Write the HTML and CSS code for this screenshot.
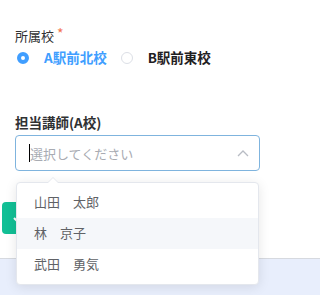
FILE: index.html
```html
<!DOCTYPE html>
<html lang="ja">
<head>
<meta charset="utf-8">
<link rel="stylesheet" href="styles.css">
</head>
<body>
<div class="page">
  <div class="panel">
    <div class="field">
      <div class="label">所属校<span class="req">*</span></div>
      <div class="radios">
        <span class="radio on"></span><span class="rtext on">A駅前北校</span>
        <span class="radio"></span><span class="rtext">B駅前東校</span>
      </div>
    </div>
    <div class="field second">
      <div class="label bold">担当講師(A校)</div>
      <div class="select">
        <span class="caret"></span><span class="ph">選択してください</span>
        <svg class="chev" width="12" height="8" viewBox="0 0 12 8"><path d="M1 7 L6 2 L11 7" fill="none" stroke="#b8bcc4" stroke-width="1.3"/></svg>
      </div>
    </div>
    <div class="btn">
      <svg width="10" height="10" viewBox="0 0 10 10"><path d="M2 5 L4.5 7.5 L9 2" fill="none" stroke="#fff" stroke-width="2"/></svg>
    </div>
    <div class="dropdown">
      <span class="arrow"></span>
      <ul class="list">
        <li class="item">山田　太郎</li>
        <li class="item hover">林　京子</li>
        <li class="item">武田　勇気</li>
      </ul>
    </div>
  </div>
</div>
</body>
</html>
```

FILE: styles.css
```css
html, body {
  margin: 0;
  padding: 0;
}
body {
  font-family: "Noto Sans CJK JP", "Noto Sans", sans-serif;
  font-size: 13px;
  background: #e8eefc;
  height: 295px;
  overflow: hidden;
}
.page {
  height: 295px;
}
.panel {
  position: relative;
  background: #fff;
  height: 259px;
  box-sizing: border-box;
  border-bottom: 1px solid #d6d9df;
  padding: 26px 0 0 15px;
}
.label {
  height: 20px;
  line-height: 20px;
  color: #303133;
  font-size: 13px;
}
.label.bold {
  font-weight: 700;
  font-size: 13.5px;
}
.req {
  color: #f3734f;
  font-size: 14px;
  margin-left: 3px;
  vertical-align: top;
  line-height: 14px;
}
.radios {
  margin-top: 2px;
  height: 20px;
  display: flex;
  align-items: center;
  padding-left: 2px;
}
.radio {
  width: 12px;
  height: 12px;
  box-sizing: border-box;
  border-radius: 50%;
  border: 1px solid #dcdfe6;
  background: #fff;
}
.radio.on {
  border: 4px solid #409eff;
}
.rtext {
  font-weight: 700;
  font-size: 13.5px;
  color: #1f2022;
  margin-left: 15px;
  margin-right: 14px;
  line-height: 20px;
  position: relative;
  top: -1px;
}
.rtext.on {
  color: #409eff;
}
.second {
  margin-top: 44px;
}
.select {
  margin-top: 3px;
  width: 245px;
  height: 36px;
  box-sizing: border-box;
  border: 1px solid #7fb4de;
  border-radius: 4px;
  display: flex;
  align-items: center;
  padding-left: 13px;
  padding-right: 10px;
}
.caret {
  width: 1px;
  height: 18px;
  background: #000;
}
.ph {
  color: #a8abb2;
  flex: 1;
  font-size: 13px;
}
.chev {
  display: block;
}
.btn {
  margin-top: 31px;
  margin-left: -13px;
  width: 60px;
  height: 32px;
  border-radius: 4px;
  background: #12bf95;
  display: flex;
  align-items: center;
  padding-left: 10px;
  box-sizing: border-box;
}
.btn svg {
  display: block;
}
.dropdown {
  position: absolute;
  left: 16px;
  top: 182px;
  width: 243px;
  box-sizing: border-box;
  background: #fff;
  border: 1px solid #e4e7ed;
  border-radius: 4px;
  box-shadow: 0 2px 12px 0 rgba(0, 0, 0, 0.1);
}
.arrow {
  position: absolute;
  top: -6px;
  left: 30px;
  width: 0;
  height: 0;
  border-left: 6px solid transparent;
  border-right: 6px solid transparent;
  border-bottom: 6px solid #e4e7ed;
}
.arrow::after {
  content: "";
  position: absolute;
  left: -5px;
  top: 1px;
  border-left: 5px solid transparent;
  border-right: 5px solid transparent;
  border-bottom: 5px solid #fff;
}
.list {
  list-style: none;
  margin: 0;
  padding: 4px 0 4px;
}
.item {
  height: 31px;
  line-height: 29px;
  padding-left: 17px;
  color: #606266;
  font-size: 13px;
  box-sizing: border-box;
  padding-bottom: 2px;
}
.item.hover {
  background: #f5f7fa;
}
```
